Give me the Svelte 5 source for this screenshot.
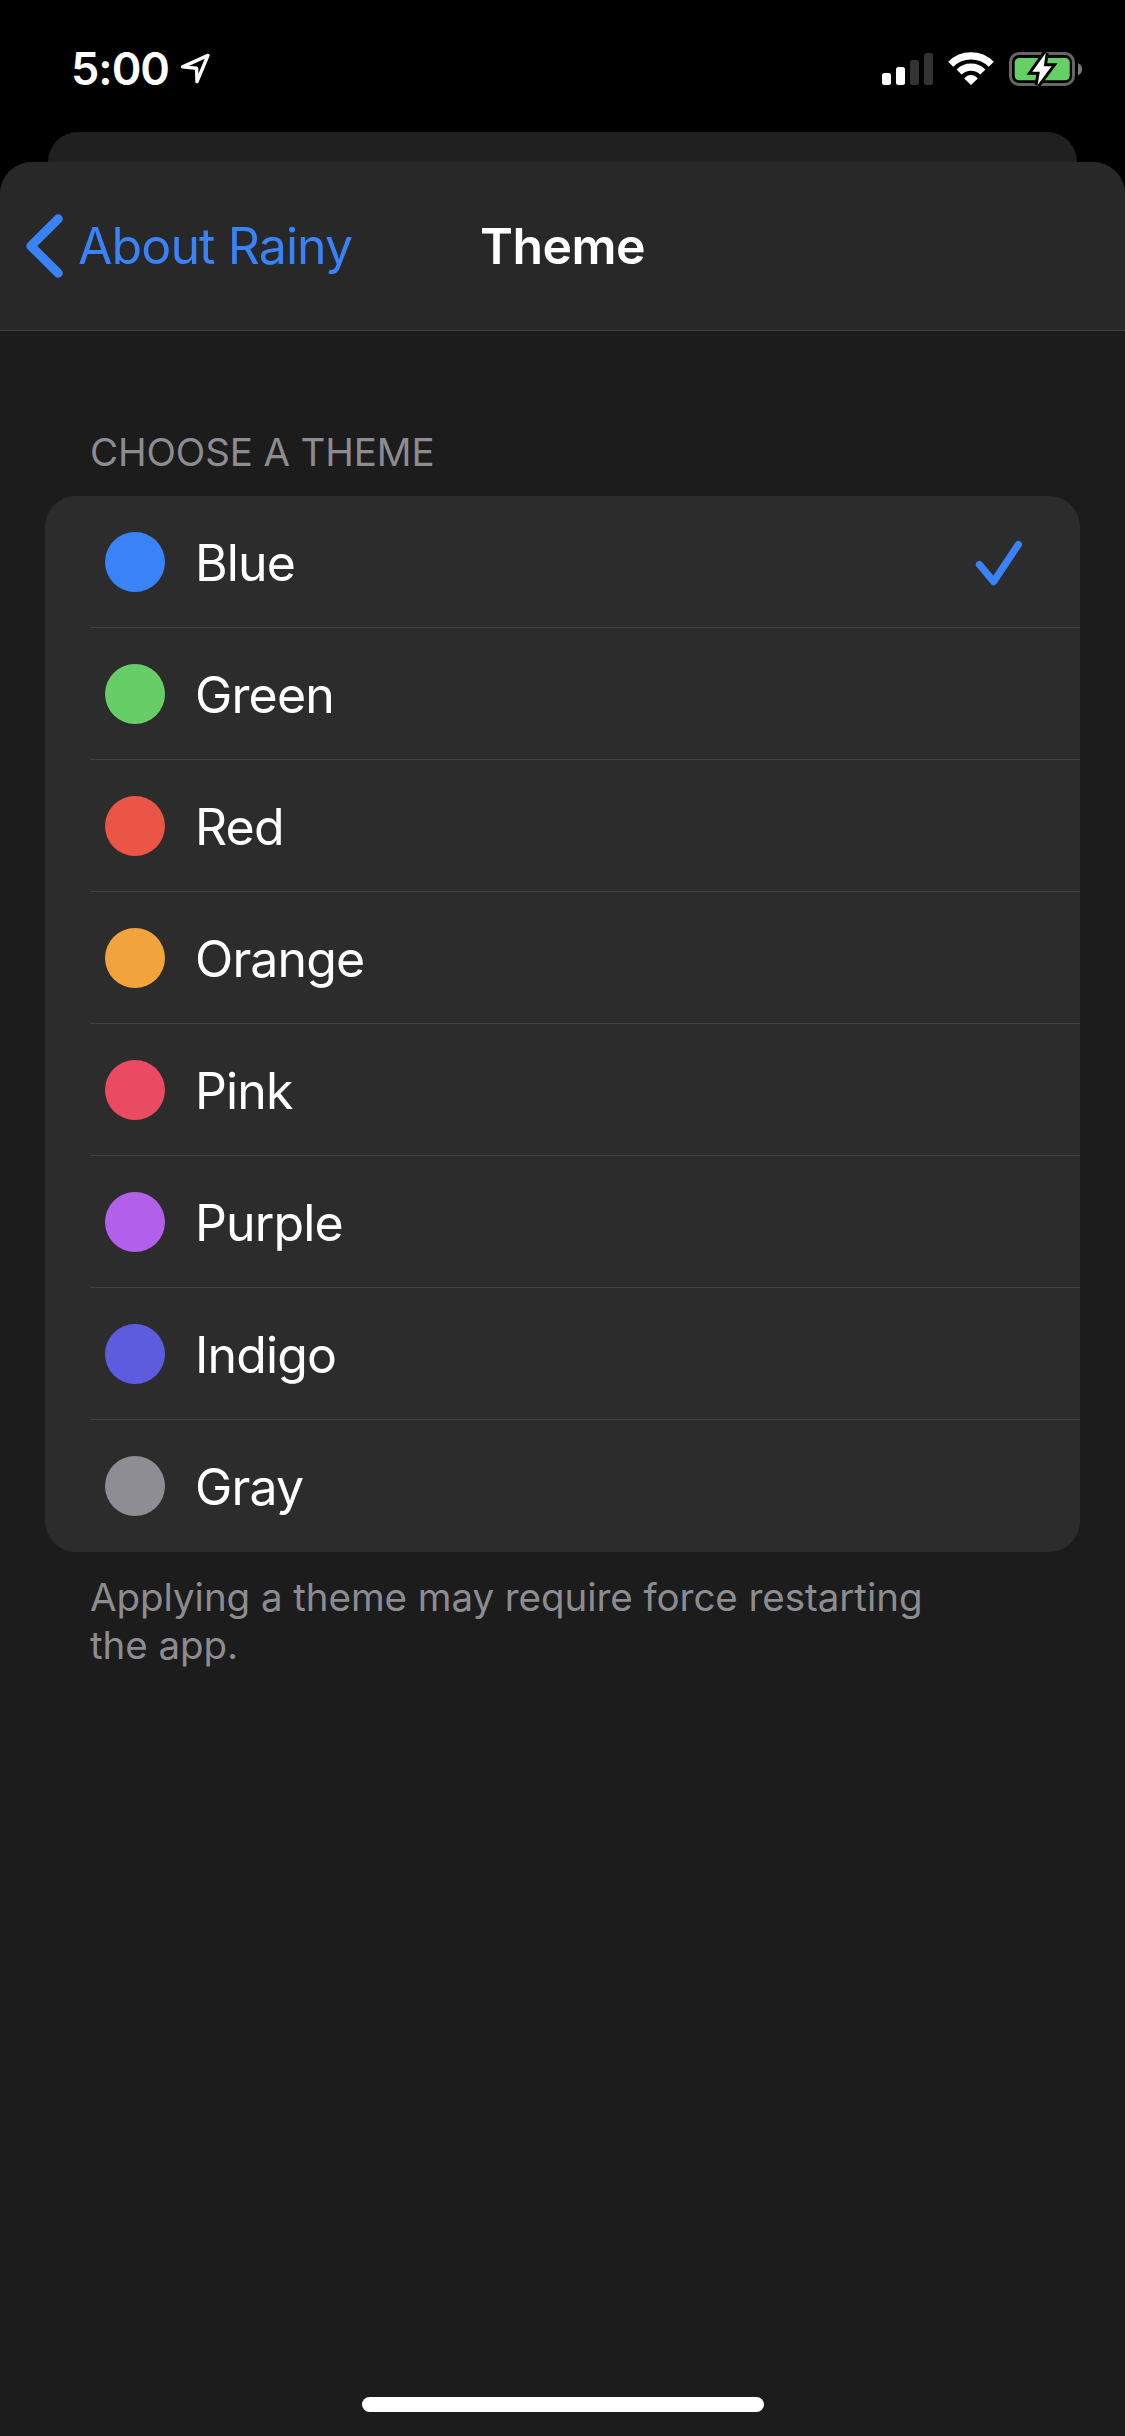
<script>
  const themes = [
    { name: 'Blue', tone: 'blue' },
    { name: 'Green', tone: 'green' },
    { name: 'Red', tone: 'red' },
    { name: 'Orange', tone: 'orange' },
    { name: 'Pink', tone: 'pink' },
    { name: 'Purple', tone: 'purple' },
    { name: 'Indigo', tone: 'indigo' },
    { name: 'Gray', tone: 'gray' }
  ];
  let selected = $state('Blue');
</script>

<div class="screen">
  <div class="status">
    <div class="clock">
      <span class="time">5:00</span>
      <svg class="location" width="32" height="34" viewBox="0 0 32 34">
        <path d="M2.6 14.9 L28 3.4 L17 29.6 L16.6 16.2 Z" fill="none" stroke="#fff" stroke-width="3.4" stroke-linejoin="round" />
      </svg>
    </div>
    <div class="indicators">
      <svg width="52" height="34" viewBox="0 0 52 34">
        <rect x="0" y="21" width="9" height="12" rx="2.5" fill="#fff" />
        <rect x="14" y="15" width="9" height="18" rx="2.5" fill="#fff" />
        <rect x="28" y="8" width="9" height="25" rx="2.5" fill="#333" />
        <rect x="42" y="1" width="9" height="32" rx="2.5" fill="#333" />
      </svg>
      <svg class="wifi" width="46" height="34" viewBox="0 0 46 34">
        <g fill="none" stroke="#fff" stroke-width="7.1">
          <path d="M2.7 12.3 A28.7 28.7 0 0 1 43.3 12.3" />
          <path d="M11.1 20 A17 17 0 0 1 34.9 20" />
        </g>
        <path d="M23 33 L16.2 26.4 Q19.2 23 23 23 T29.8 26.4 Z" fill="#fff" />
      </svg>
      <svg class="battery" width="74" height="36" viewBox="0 0 74 36">
        <rect x="1.5" y="2.5" width="63" height="31" rx="8.5" fill="none" stroke="#666" stroke-width="3" />
        <rect x="5.7" y="7" width="55" height="22.3" rx="4.5" fill="#66cf66" />
        <path d="M69 12 Q73 14 73 18.2 T69 24.4 Z" fill="#7a7a7a" />
        <path d="M36.7 2 L23.3 20.8 H30.8 L28.6 34 L42.6 15.2 H34.8 Z" fill="#fff" stroke="#000" stroke-width="6" paint-order="stroke" />
      </svg>
    </div>
  </div>

  <div class="behind"></div>

  <div class="sheet">
    <header class="nav">
      <button class="back">
        <svg width="40" height="68" viewBox="0 0 40 68">
          <path d="M34.3 6.8 L6.9 34 L34.3 61.2" fill="none" stroke="#3a82f7" stroke-width="9" stroke-linecap="round" stroke-linejoin="round" />
        </svg>
        <span>About Rainy</span>
      </button>
      <h1>Theme</h1>
    </header>

    <section>
      <h2>Choose a theme</h2>
      <ul>
        {#each themes as theme (theme.name)}
          <li>
            <button class="row" onclick={() => (selected = theme.name)}>
              <span class="dot {theme.tone}"></span>
              <span class="label">{theme.name}</span>
              {#if selected === theme.name}
                <svg width="48" height="48" viewBox="0 0 48 48">
                  <path d="M4.4 26.5 L18.7 43.6 L43.4 6.5" fill="none" stroke="#3a82f7" stroke-width="7.2" stroke-linecap="round" stroke-linejoin="round" />
                </svg>
              {/if}
            </button>
          </li>
        {/each}
      </ul>
      <p>Applying a theme may require force restarting<br />the app.</p>
    </section>

    <div class="home"></div>
  </div>
</div>

<style>
  :global(body) {
    background: #000;
  }
  .screen {
    display: flex;
    flex-direction: column;
    width: 1125px;
    height: 2436px;
    overflow: hidden;
    background: #000;
    color: #fff;
    font-family: Inter, 'Liberation Sans', sans-serif;
  }
  button {
    border: 0;
    padding: 0;
    background: none;
    font: inherit;
    color: inherit;
  }
  svg {
    display: block;
    flex: none;
  }
  .status {
    display: flex;
    justify-content: space-between;
    height: 132px;
    flex: none;
  }
  .clock {
    display: flex;
    padding: 42px 0 0 71px;
  }
  .time {
    font-size: 45px;
    font-weight: 600;
    line-height: 54px;
    letter-spacing: -1px;
  }
  .location {
    margin: 10px 0 0 11px;
  }
  .indicators {
    display: flex;
    padding: 52px 42px 0 0;
  }
  .wifi {
    margin-left: 14px;
  }
  .battery {
    margin: -1px 0 0 15px;
  }
  .behind {
    flex: none;
    height: 30px;
    margin: 0 48px;
    border-radius: 30px 30px 0 0;
    background: #202020;
  }
  .sheet {
    flex: 1;
    display: flex;
    flex-direction: column;
    border-radius: 32px 32px 0 0;
    background: #1c1c1c;
    overflow: hidden;
  }
  .nav {
    flex: none;
    box-sizing: border-box;
    display: grid;
    grid-template-columns: 1fr auto 1fr;
    align-items: center;
    height: 169px;
    border-bottom: 1px solid #3d3d3e;
    background: #282828;
  }
  .back {
    display: flex;
    align-items: center;
    gap: 14px;
    padding-left: 24px;
    color: #3a82f7;
    font-size: 50px;
    letter-spacing: -0.9px;
    white-space: nowrap;
  }
  h1 {
    margin: 0;
    font-size: 50px;
    font-weight: 600;
    letter-spacing: -0.6px;
  }
  section {
    flex: 1;
    padding: 98px 45px 0;
  }
  h2 {
    margin: 0 0 20px 45px;
    color: #8d8c92;
    font-size: 38.5px;
    font-weight: 400;
    line-height: 47px;
    letter-spacing: -0.12px;
    text-transform: uppercase;
  }
  ul {
    margin: 0;
    padding: 0;
    list-style: none;
    border-radius: 31px;
    background: #2c2c2c;
  }
  li {
    height: 132px;
    padding-left: 45px;
  }
  .row {
    box-sizing: border-box;
    display: flex;
    align-items: center;
    width: 100%;
    height: 132px;
    padding: 0 57px 0 15px;
    border-bottom: 1px solid #434344;
    text-align: left;
  }
  li:last-child .row {
    border-bottom-color: transparent;
  }
  .dot {
    width: 60px;
    height: 60px;
    border-radius: 50%;
  }
  .blue { background: #3a82f7; }
  .green { background: #67ce67; }
  .red { background: #eb5545; }
  .orange { background: #f1a33c; }
  .pink { background: #ea4b62; }
  .purple { background: #b260ea; }
  .indigo { background: #5d5cde; }
  .gray { background: #8e8d93; }
  .label {
    flex: 1;
    margin-left: 30px;
    padding-top: 2px;
    font-size: 50px;
    line-height: 60px;
    letter-spacing: -0.85px;
  }
  p {
    margin: 21px 45px 0;
    color: #8d8c92;
    font-size: 38.5px;
    line-height: 48px;
    letter-spacing: -0.05px;
  }
  .home {
    flex: none;
    align-self: center;
    width: 402px;
    height: 15px;
    margin-bottom: 24px;
    border-radius: 8px;
    background: #fff;
  }
</style>
